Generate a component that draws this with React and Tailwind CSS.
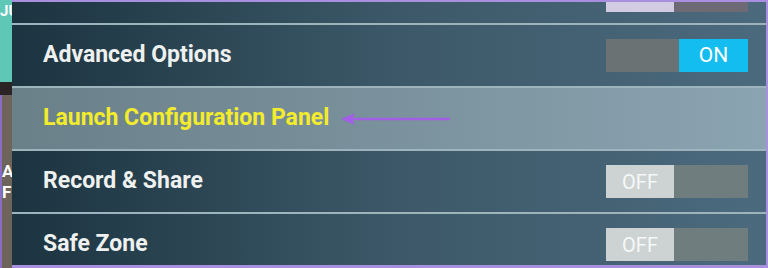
function Toggle({ on }) {
  if (on) {
    return (
      <div className="flex h-[33px] w-[142px] shrink-0">
        <div className="w-[73px] bg-[#6b7273]" />
        <div className="flex flex-1 items-center justify-center bg-[#13bdf0] text-[21px] text-white">ON</div>
      </div>
    );
  }
  return (
    <div className="flex h-[33px] w-[142px] shrink-0">
      <div className="flex w-[68px] items-center justify-center bg-[#cdd2d2] text-[20px] text-[#f6f8f8]">OFF</div>
      <div className="flex-1 bg-[#6f7d7e]" />
    </div>
  );
}

function Row({ label, on, h = 'h-[63px]' }) {
  return (
    <div className={`flex ${h} shrink-0 items-center justify-between border-t-2 border-[#9db4bd] pl-[31px] pr-[18px]`}>
      <span className="text-[23px] font-bold text-[#eef1ef]">{label}</span>
      <Toggle on={on} />
    </div>
  );
}

export default function App() {
  return (
    <div
      className="flex h-[268px] w-[768px] overflow-hidden bg-[#8b6cc4]"
      style={{ fontFamily: 'Roboto, "Liberation Sans", sans-serif' }}
    >
      {/* sliver of the app behind */}
      <div className="flex w-[12px] shrink-0 flex-col">
        <div className="h-[82px] overflow-hidden bg-[#5ec7b6] pt-[4px] text-[15px] font-bold leading-none text-white">JU</div>
        <div className="h-[13px] bg-[#2a2424]" />
        <div className="flex flex-1 flex-col gap-[4px] overflow-hidden border-l-2 border-[#8b6cc4] bg-[#6d645c] pt-[68px] text-[17px] font-bold leading-none text-white">
          <span>A</span>
          <span>F</span>
        </div>
      </div>

      <div className="flex flex-1 flex-col overflow-hidden border-t-2 border-r-2 border-b-[3px] border-[#a98fe0] bg-gradient-to-r from-[#1c3440] via-[#3c5868] to-[#4c6a7e]">
        <div className="flex h-[21px] shrink-0 items-end justify-end overflow-hidden pr-[18px]">
          <div className="mb-[11px] flex h-[33px] w-[142px] shrink-0">
            <div className="w-[68px] bg-[#d2cbe2]" />
            <div className="flex-1 bg-[#6d6a76]" />
          </div>
        </div>
        <Row label="Advanced Options" on />
        <div className="flex h-[63px] shrink-0 items-center border-t-2 border-[#9db4bd] bg-gradient-to-r from-[#6a8089] to-[#8ba4b1] pl-[31px]">
          <span className="text-[23px] font-bold text-[#f3ec2c]">Launch Configuration Panel</span>
          <svg width="112" height="16" viewBox="0 0 112 16" className="ml-[10px] mt-[1px]">
            <path d="M6 8 H110" stroke="#a25ee6" strokeWidth="2.5" strokeLinecap="round" />
            <path d="M2 8 L16 2 L13 8 L16 14 Z" fill="#a25ee6" />
          </svg>
        </div>
        <Row label="Record & Share" />
        <Row label="Safe Zone" />
      </div>
    </div>
  );
}
